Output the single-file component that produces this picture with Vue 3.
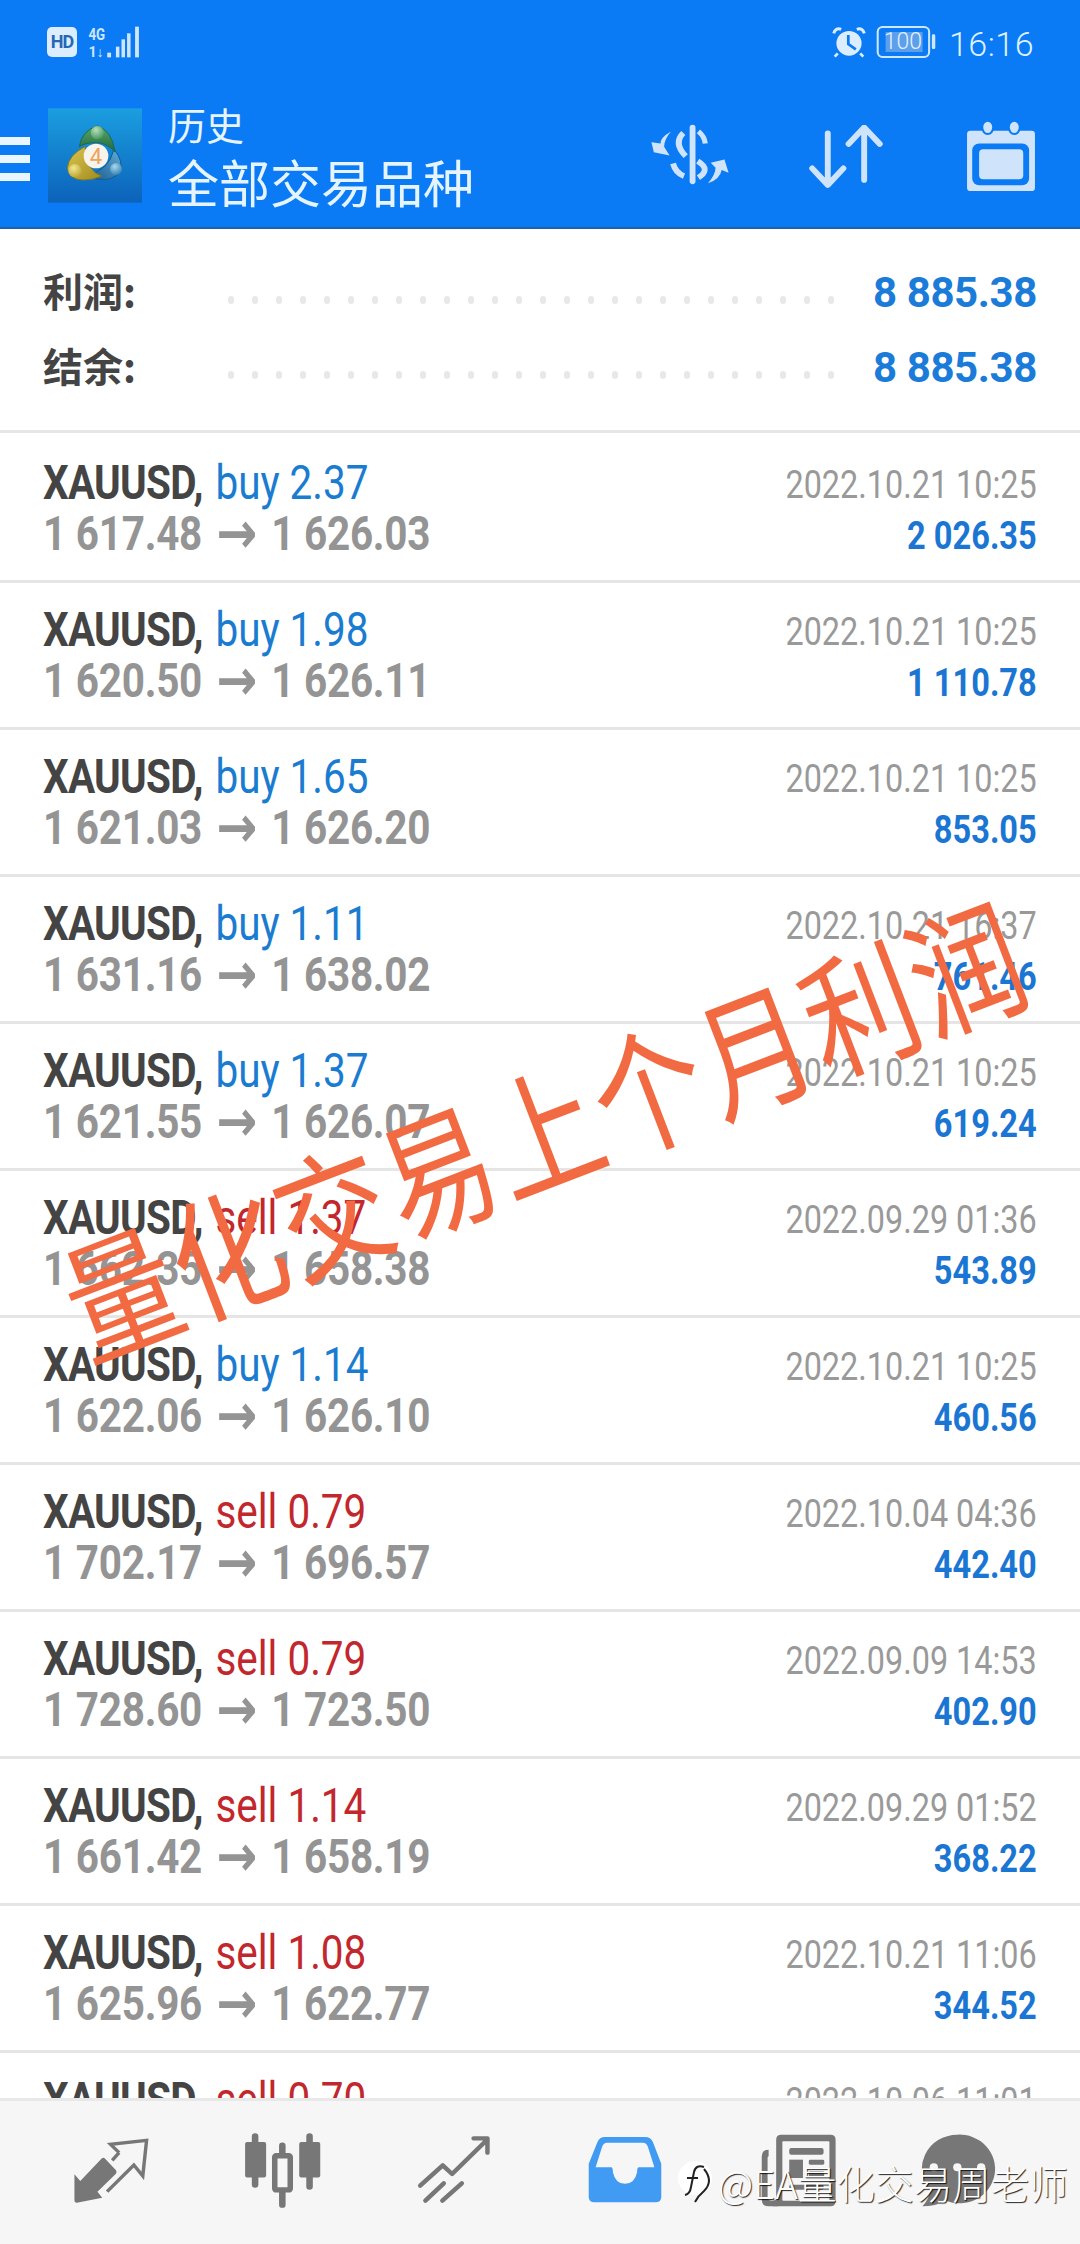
<script setup>
const rows = [
  ['buy 2.37', '1 617.48', '1 626.03', '2022.10.21 10:25', '2 026.35'],
  ['buy 1.98', '1 620.50', '1 626.11', '2022.10.21 10:25', '1 110.78'],
  ['buy 1.65', '1 621.03', '1 626.20', '2022.10.21 10:25', '853.05'],
  ['buy 1.11', '1 631.16', '1 638.02', '2022.10.21 16:37', '761.46'],
  ['buy 1.37', '1 621.55', '1 626.07', '2022.10.21 10:25', '619.24'],
  ['sell 1.37', '1 662.35', '1 658.38', '2022.09.29 01:36', '543.89'],
  ['buy 1.14', '1 622.06', '1 626.10', '2022.10.21 10:25', '460.56'],
  ['sell 0.79', '1 702.17', '1 696.57', '2022.10.04 04:36', '442.40'],
  ['sell 0.79', '1 728.60', '1 723.50', '2022.09.09 14:53', '402.90'],
  ['sell 1.14', '1 661.42', '1 658.19', '2022.09.29 01:52', '368.22'],
  ['sell 1.08', '1 625.96', '1 622.77', '2022.10.21 11:06', '344.52'],
  ['sell 0.70', '1 633.20', '1 628.28', '2022.10.06 11:01', '344.40'],
]
const summary = [['利润:', '8 885.38'], ['结余:', '8 885.38']]
</script>

<template>
  <div class="page">
    <header class="top">
      <div class="status">
        <div class="status-left">
          <span class="hd">HD</span>
          <svg class="signal" viewBox="250 75 155 102" preserveAspectRatio="none">
            <text x="254" y="120" class="sig-t" textLength="48" lengthAdjust="spacingAndGlyphs">4G</text>
            <text x="254" y="172" class="sig-t small" textLength="44" lengthAdjust="spacingAndGlyphs">1↓</text>
            <rect x="308" y="158" width="11" height="14" fill="#cfe6ff"/>
            <rect x="333" y="140" width="10" height="32" fill="#cfe6ff"/>
            <rect x="349" y="118" width="10" height="54" fill="#cfe6ff"/>
            <rect x="365" y="100" width="10" height="72" fill="#cfe6ff"/>
            <rect x="388" y="80" width="11" height="92" fill="#cfe6ff"/>
          </svg>
        </div>
        <div class="status-right">
          <svg class="alarm" viewBox="845 78 100 96" preserveAspectRatio="none">
            <circle cx="895" cy="130" r="37" fill="#dcedff"/>
            <path d="M850 100 Q855 82 872 88 M940 100 Q935 82 918 88" stroke="#dcedff" stroke-width="9" fill="none"/>
            <path d="M862 160 L853 170 M928 160 L937 170" stroke="#dcedff" stroke-width="8"/>
            <path d="M893 105 L893 132 L915 148" stroke="#0a7bf5" stroke-width="8" fill="none"/>
          </svg>
          <div class="batt">
            <svg class="batt-svg" viewBox="975 76 178 102" preserveAspectRatio="none">
              <rect x="980" y="82" width="150" height="90" rx="14" fill="none" stroke="#cfe6ff" stroke-width="6"/>
              <rect x="1003" y="97" width="108" height="60" fill="#5c9fea"/>
              <rect x="1138" y="104" width="10" height="44" rx="4" fill="#cfe6ff"/>
            </svg>
            <span class="batt-t">100</span>
          </div>
          <span class="time">16:16</span>
        </div>
      </div>
      <div class="bar">
        <div class="burger"><i></i><i></i><i></i></div>
        <svg class="logo" viewBox="0 0 330 330">
          <defs>
            <linearGradient id="lg" x1="0" y1="0" x2="0" y2="1">
              <stop offset="0" stop-color="#1b9ee0"/>
              <stop offset="1" stop-color="#0c62ba"/>
            </linearGradient>
            <linearGradient id="gg" x1="0" y1="0" x2="0" y2="1"><stop offset="0" stop-color="#58a76c"/><stop offset="1" stop-color="#1f6a3c"/></linearGradient>
            <linearGradient id="yy" x1="0" y1="0" x2="1" y2="1"><stop offset="0" stop-color="#dcc650"/><stop offset="1" stop-color="#a08a1e"/></linearGradient>
            <linearGradient id="bb" x1="1" y1="0" x2="0" y2="1"><stop offset="0" stop-color="#62aed6"/><stop offset="1" stop-color="#14568f"/></linearGradient>
            <radialGradient id="gb" cx=".4" cy=".3" r=".8"><stop offset="0" stop-color="#b5e0b8"/><stop offset="1" stop-color="#3c8f58"/></radialGradient>
            <radialGradient id="yb" cx=".4" cy=".3" r=".8"><stop offset="0" stop-color="#f4e78e"/><stop offset="1" stop-color="#b59f2c"/></radialGradient>
            <radialGradient id="bl" cx=".4" cy=".3" r=".8"><stop offset="0" stop-color="#a9d8ef"/><stop offset="1" stop-color="#2c78ad"/></radialGradient>
          </defs>
          <rect x="24" y="25" width="282" height="283" fill="url(#lg)"/>
          <path d="M222 148 Q252 185 240 215 Q215 245 175 238 Q150 235 140 225 Q205 215 222 148Z" fill="url(#bb)" stroke="#0f5d96" stroke-width="3"/>
          <path d="M135 140 Q85 165 82 205 Q90 240 130 240 Q160 240 185 228 Q140 215 135 140Z" fill="url(#yy)" stroke="#7d7a2a" stroke-width="3"/>
          <path d="M118 140 Q125 92 172 78 Q215 90 225 155 Q195 125 165 128 Q135 128 118 140Z" fill="url(#gg)" stroke="#1b6a55" stroke-width="3"/>
          <circle cx="172" cy="98" r="20" fill="url(#gb)"/>
          <circle cx="105" cy="212" r="20" fill="url(#yb)"/>
          <circle cx="228" cy="207" r="18" fill="url(#bl)"/>
          <circle cx="168" cy="168" r="37" fill="#f8f4ec"/>
          <text x="168" y="192" text-anchor="middle" class="logo-4">4</text>
        </svg>
        <div class="titles">
          <div class="t1">历史</div>
          <div class="t2">全部交易品种</div>
        </div>
        <div class="actions">
          <svg class="a-money" viewBox="315 370 245 190" preserveAspectRatio="none">
            <path d="M445 384 V546" stroke="#cfe4fb" stroke-width="17" stroke-linecap="round"/>
            <path d="M418 400 Q388 430 425 470" stroke="#cfe4fb" stroke-width="17" fill="none"/>
            <path d="M462 395 Q480 410 482 432" stroke="#cfe4fb" stroke-width="15" fill="none"/>
            <path d="M460 485 Q500 510 462 535" stroke="#cfe4fb" stroke-width="17" fill="none"/>
            <path d="M388 492 Q395 520 420 530" stroke="#cfe4fb" stroke-width="17" fill="none"/>
            <path d="M382 396 Q350 415 352 432 L325 428 L332 458 L378 468 L362 442 Q362 420 382 396Z" fill="#cfe4fb"/>
            <path d="M490 552 Q525 540 530 512 L550 520 L538 480 L498 490 L512 505 Q512 525 490 552Z" fill="#cfe4fb"/>
          </svg>
          <svg class="a-sort" viewBox="775 375 228 195" preserveAspectRatio="none">
            <path d="M835 400 V552 M790 505 L835 555 L880 505 M940 540 V385 M895 432 L940 382 L985 432" stroke="#cfe4fb" stroke-width="17" stroke-linecap="round" stroke-linejoin="round" fill="none"/>
          </svg>
          <svg class="a-cal" viewBox="1240 360 203 215" preserveAspectRatio="none">
            <rect x="1243" y="392" width="197" height="180" rx="10" fill="#cfe4fb"/>
            <rect x="1258" y="430" width="165" height="125" rx="20" fill="#0a7bf5"/>
            <rect x="1278" y="447" width="128" height="90" rx="12" fill="#cfe4fb"/>
            <ellipse cx="1303" cy="382" rx="16" ry="20" fill="#cfe4fb" stroke="#0a7bf5" stroke-width="6"/>
            <ellipse cx="1380" cy="382" rx="16" ry="20" fill="#cfe4fb" stroke="#0a7bf5" stroke-width="6"/>
          </svg>
        </div>
      </div>
    </header>

    <main class="content">
      <section class="summary">
        <div v-for="s in summary" :key="s[0]" class="sum-row">
          <span class="sum-label">{{ s[0] }}</span>
          <span class="dots"><i v-for="n in 26" :key="n"></i></span>
          <span class="sum-val">{{ s[1] }}</span>
        </div>
      </section>
      <div v-for="(r, i) in rows" :key="i" class="row">
        <div class="left">
          <div class="l1"><b>XAUUSD,</b><span :class="r[0].startsWith('buy') ? 'buy' : 'sell'">{{ r[0] }}</span></div>
          <div class="l2">{{ r[1] }}<span class="arrow">→</span>{{ r[2] }}</div>
        </div>
        <div class="right">
          <div class="date">{{ r[3] }}</div>
          <div class="amt">{{ r[4] }}</div>
        </div>
      </div>
    </main>

    <nav class="nav">
      <svg class="n1" viewBox="205 285 230 210" preserveAspectRatio="none">
        <path d="M295 352 Q300 348 305 354 L336 388 Q340 394 335 399 L282 452 L296 470 L222 485 Q215 486 215 478 L215 400 L232 420Z" fill="#777"/>
        <path d="M345 335 L325 358 M345 335 L320 310 L425 298 L414 405 L388 372 L310 452" stroke="#777" stroke-width="10" fill="none"/>
      </svg>
      <svg class="n2" viewBox="700 275 235 230" preserveAspectRatio="none">
        <path d="M738 288 V432 M817 316 V492 M896 288 V438" stroke="#777" stroke-width="19" stroke-linecap="round"/>
        <rect x="709" y="305" width="61" height="106" rx="6" fill="#777"/>
        <rect x="866" y="305" width="61" height="106" rx="6" fill="#777"/>
        <rect x="795" y="346" width="45" height="102" rx="4" fill="#f6f6f6" stroke="#777" stroke-width="16"/>
      </svg>
      <svg class="n3" viewBox="1205 280 225 225" preserveAspectRatio="none">
        <path d="M1220 435 L1285 374 L1312 400 L1410 300 M1374 293 H1414 V336" stroke="#777" stroke-width="13" stroke-linecap="round" stroke-linejoin="round" fill="none"/>
        <path d="M1235 480 L1288 428 M1284 480 L1340 428" stroke="#777" stroke-width="13" stroke-linecap="round"/>
      </svg>
      <svg class="n4" viewBox="140 283 220 208" preserveAspectRatio="none">
        <path d="M192 289 H308 Q325 289 331 305 L355 370 V470 Q355 486 338 486 H162 Q145 486 145 470 V370 L170 305 Q176 289 192 289Z" fill="#429bf3"/>
        <path d="M198 306 H302 Q312 306 316 318 L335 380 H290 Q285 380 285 395 Q278 430 250 430 Q222 430 215 395 Q215 380 210 380 H165 L184 318 Q188 306 198 306Z" fill="#f6f6f6"/>
      </svg>
      <svg class="n5" viewBox="640 275 230 225" preserveAspectRatio="none">
        <path d="M648 345 Q648 325 668 325 V345 Q665 345 665 350 V470 Q665 478 680 478 H695 V495 H668 Q648 495 648 475Z" fill="#777"/>
        <path d="M705 280 H848 Q863 280 863 295 V480 Q863 495 848 495 H680 V478 Q690 478 690 470 V295 Q690 280 705 280Z" fill="#777"/>
        <rect x="708" y="300" width="137" height="178" rx="3" fill="#f6f6f6"/>
        <rect x="728" y="320" width="100" height="20" rx="6" fill="#777"/>
        <rect x="728" y="355" width="40" height="55" fill="#777"/>
        <rect x="785" y="355" width="45" height="15" rx="4" fill="#777"/>
        <rect x="785" y="390" width="45" height="15" rx="4" fill="#777"/>
        <rect x="728" y="430" width="100" height="15" rx="4" fill="#777"/>
      </svg>
      <svg class="n6" viewBox="1105 275 220 225" preserveAspectRatio="none">
        <path d="M1213 280 A103 103 0 1 1 1180 478 Q1150 495 1112 495 Q1130 475 1135 450 A103 103 0 0 1 1213 280Z" fill="#777"/>
        <circle cx="1145" cy="378" r="12" fill="#f6f6f6"/>
        <circle cx="1213" cy="378" r="12" fill="#f6f6f6"/>
        <circle cx="1282" cy="378" r="12" fill="#f6f6f6"/>
      </svg>
    </nav>

    <div class="stamp">量化交易上个月利润</div>
    <div class="mark">
      <svg class="mark-logo" viewBox="0 0 36 42">
        <circle cx="17" cy="17" r="17" fill="#fff"/>
        <path d="M26 6 Q18 3 16 11 L13 26 Q12 33 7 34 M9 17 H20 M26 8 Q36 20 26 30 Q20 35 17 41" stroke="#222" stroke-width="2" fill="none"/>
      </svg>
      <span>@EA量化交易周老师</span>
    </div>
  </div>
</template>

<style scoped>
.page {
  position: relative;
  width: 1080px;
  height: 2244px;
  overflow: hidden;
  display: flex;
  flex-direction: column;
  background: #fff;
  font-family: Roboto, "Noto Sans CJK SC", sans-serif;
}
.top {
  height: 229px;
  flex: none;
  box-sizing: border-box;
  background: #0a7bf5;
  border-bottom: 2px solid #1c62ad;
  color: #e6f4ff;
}
.status {
  height: 106px;
  display: flex;
  justify-content: space-between;
  box-sizing: border-box;
  padding: 27px 46px 0 47px;
}
.status-left { display: flex; gap: 10px; height: 32px; }
.hd {
  width: 30px;
  height: 30px;
  border-radius: 5px;
  background: #dcedff;
  color: #2468b4;
  font-size: 18px;
  font-weight: 700;
  line-height: 30px;
  text-align: center;
  letter-spacing: -1px;
}
.signal { width: 54px; height: 34px; margin-top: -2px; }
.sig-t { font-family: Roboto, sans-serif; font-size: 52px; font-weight: 700; fill: #cfe6ff; }
.sig-t.small { font-size: 42px; }
.status-right { display: flex; align-items: flex-start; gap: 10px; }
.alarm { width: 34px; height: 32px; margin-top: -1px; }
.batt { position: relative; width: 61px; height: 34px; margin-top: -2px; }
.batt-svg { width: 61px; height: 34px; display: block; }
.batt-t {
  position: absolute;
  left: 6px;
  top: 3px;
  width: 42px;
  text-align: center;
  font-size: 23px;
  line-height: 28px;
  color: #e2f0ff;
  font-weight: 300;
}
.time {
  font-size: 34px;
  line-height: 34px;
  font-family: Roboto, sans-serif;
  font-weight: 300;
  color: #dff0ff;
  letter-spacing: 0.5px;
  margin-left: 2px;
}
.bar { display: flex; height: 121px; }
.burger {
  width: 30px;
  height: 44px;
  margin-top: 31px;
  display: flex;
  flex-direction: column;
  justify-content: space-between;
}
.burger i { display: block; height: 8px; background: #eaf6ff; }
.logo { width: 110px; height: 110px; margin: -6px 0 0 10px; flex: none; }
.logo-4 { font-family: Roboto, sans-serif; font-size: 66px; fill: #eda35c; font-weight: 400; }
.titles { margin-left: 18px; font-family: "Noto Sans CJK SC", sans-serif; }
.t1 { font-size: 38px; line-height: 44px; margin-top: -4px; }
.t2 { font-size: 51px; line-height: 60px; margin-top: 5px; }
.actions { position: relative; flex: 1; display: flex; align-items: flex-start; }
.a-money { width: 84px; height: 63px; margin: 17px 0 0 174px; }
.a-sort { width: 79px; height: 65px; margin: 19px 0 0 75px; }
.a-cal { width: 70px; height: 72px; margin: 14px 0 0 80px; }

.content { flex: 1; min-height: 0; overflow: hidden; }
.summary {
  height: 204px;
  box-sizing: border-box;
  padding: 26px 43px 0 43px;
  border-bottom: 3px solid #e6e6e6;
}
.sum-row { display: flex; align-items: center; height: 75px; }
.sum-label { width: 185px; font-size: 40px; font-weight: 700; color: #444; font-family: "Noto Sans CJK SC", sans-serif; margin-top: -5px; }
.dots { display: flex; gap: 18px; margin-top: 14px; }
.dots i { display: block; width: 6px; height: 8px; border-radius: 3px; background: #e8e8e8; }
.sum-val { margin-left: auto; font-size: 42px; font-weight: 700; letter-spacing: -0.4px; color: #1a7cd8; }

.row {
  height: 147px;
  box-sizing: border-box;
  border-bottom: 3px solid #e5e5e5;
  padding: 21px 43px 0 43px;
  display: flex;
  justify-content: space-between;
}
.summary + .row { height: 150px; padding-top: 24px; }
.left { width: 500px; }
.l1, .l2 {
  height: 51px;
  line-height: 51px;
  font-size: 48px;
  white-space: nowrap;
  transform: scaleX(0.843);
  transform-origin: left center;
}
.l1 b { font-weight: 700; color: #444; letter-spacing: -0.85px; margin-right: 15px; }
.l2 { color: #949494; font-weight: 700; letter-spacing: -0.3px; }
.arrow {
  display: inline-block;
  width: 50px;
  margin: 0 16px;
  text-align: center;
  font-family: "DejaVu Sans", sans-serif;
  font-size: 58px;
  font-weight: 700;
  line-height: 51px;
  vertical-align: top;
}
.buy { color: #1a7cd0; }
.sell { color: #c2272d; }
.right { text-align: right; }
.date, .amt {
  white-space: nowrap;
  transform-origin: right center;
}
.date {
  height: 51px;
  line-height: 51px;
  font-size: 39px;
  color: #999;
  margin-top: 3px;
  transform: scaleX(0.83);
}
.amt {
  height: 51px;
  line-height: 51px;
  font-size: 39px;
  font-weight: 700;
  color: #1a76d2;
  transform: scaleX(0.835);
}

.nav {
  height: 146px;
  flex: none;
  box-sizing: border-box;
  background: #f6f6f6;
  border-top: 3px solid #e8e8e8;
  position: relative;
  display: flex;
  align-items: flex-start;
  padding-left: 71px;
}
.nav svg { display: block; flex: none; }
.n1 { width: 79px; height: 70px; margin-top: 35px; }
.n2 { width: 81px; height: 77px; margin: 31px 0 0 92px; }
.n3 { width: 78px; height: 75px; margin: 33px 0 0 92px; }
.n4 { width: 76px; height: 69px; margin: 34px 0 0 94px; }
.n5 { width: 79px; height: 75px; margin: 32px 0 0 96px; }
.n6 { width: 76px; height: 75px; margin: 32px 0 0 82px; }

.stamp {
  position: absolute;
  left: 2px;
  top: 1069px;
  width: 1080px;
  text-align: center;
  font-family: "Noto Sans CJK SC", sans-serif;
  font-size: 111px;
  line-height: 112px;
  letter-spacing: 2px;
  color: #f26a42;
  white-space: nowrap;
  transform: rotate(-21deg) scaleY(1.2);
}
.mark {
  position: absolute;
  left: 678px;
  top: 2159px;
  display: flex;
  align-items: center;
  gap: 4px;
  height: 46px;
  color: #fff;
  font-family: "Noto Sans CJK SC", sans-serif;
  font-weight: 300;
  font-size: 38.6px;
  white-space: nowrap;
  text-shadow: 1px 1px 1px rgba(0, 0, 0, 0.85);
}
.mark-logo { width: 36px; height: 42px; }
</style>
